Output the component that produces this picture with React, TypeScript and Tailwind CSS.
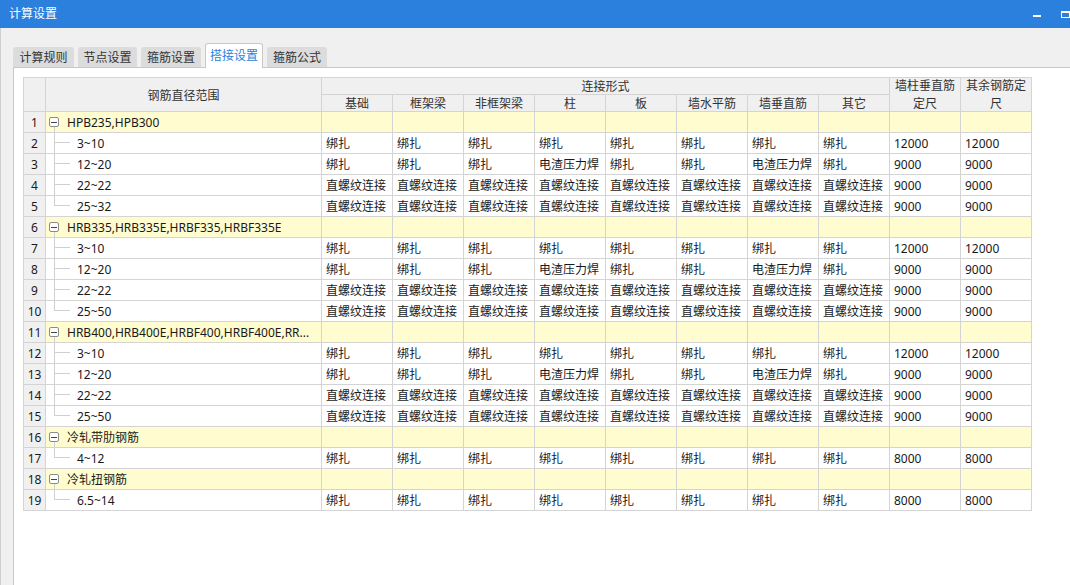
import React from 'react';

type Row = { n: number; label: string; group?: boolean; last?: boolean; vals?: string[] };

const B = '绑扎';
const Z = '直螺纹连接';
const D = '电渣压力焊';

const v310 = [B, B, B, B, B, B, B, B, '12000', '12000'];
const v1220 = [B, B, B, D, B, B, D, B, '9000', '9000'];
const vZ = [Z, Z, Z, Z, Z, Z, Z, Z, '9000', '9000'];
const v8000 = [B, B, B, B, B, B, B, B, '8000', '8000'];

const rows: Row[] = [
  { n: 1, label: 'HPB235,HPB300', group: true },
  { n: 2, label: '3~10', vals: v310 },
  { n: 3, label: '12~20', vals: v1220 },
  { n: 4, label: '22~22', vals: vZ },
  { n: 5, label: '25~32', vals: vZ, last: true },
  { n: 6, label: 'HRB335,HRB335E,HRBF335,HRBF335E', group: true },
  { n: 7, label: '3~10', vals: v310 },
  { n: 8, label: '12~20', vals: v1220 },
  { n: 9, label: '22~22', vals: vZ },
  { n: 10, label: '25~50', vals: vZ, last: true },
  { n: 11, label: 'HRB400,HRB400E,HRBF400,HRBF400E,RR...', group: true },
  { n: 12, label: '3~10', vals: v310 },
  { n: 13, label: '12~20', vals: v1220 },
  { n: 14, label: '22~22', vals: vZ },
  { n: 15, label: '25~50', vals: vZ, last: true },
  { n: 16, label: '冷轧带肋钢筋', group: true },
  { n: 17, label: '4~12', vals: v8000, last: true },
  { n: 18, label: '冷轧扭钢筋', group: true },
  { n: 19, label: '6.5~14', vals: v8000, last: true },
];

const subHeads = ['基础', '框架梁', '非框架梁', '柱', '板', '墙水平筋', '墙垂直筋', '其它'];

const tabs = [
  { label: '计算规则', w: 'w-[61px]' },
  { label: '节点设置', w: 'w-[59px]' },
  { label: '箍筋设置', w: 'w-[60px]' },
  { label: '搭接设置', w: 'w-[58px]', active: true },
  { label: '箍筋公式', w: 'w-[60px]' },
];

const cell = 'border-r border-b border-[#d4d4d4]';

const App: React.FC = () => {
  return (
    <div className="w-[1070px] h-[585px] overflow-hidden flex flex-col bg-[#f0f0f0] text-[12px] text-[#1a1a1a] font-['Noto_Sans','Noto_Sans_CJK_SC',sans-serif]">
      {/* title bar */}
      <div className="h-[28px] shrink-0 bg-[#2b7fdd] flex items-center pl-[9px] text-white">
        <span>计算设置</span>
        <div className="ml-auto flex items-center">
          <div className="w-[8px] h-[2px] bg-white mt-[4px]" />
          <div className="w-[9px] h-[7px] ml-[20px] border border-t-2 border-white" />
        </div>
      </div>

      <div className="flex-1 flex flex-col border-l border-[#cfcfcf]">
        {/* tabs */}
        <div className="h-[39px] shrink-0 flex items-end gap-[4px] pl-[12px]">
          {tabs.map((t) =>
            t.active ? (
              <div
                key={t.label}
                className={`${t.w} h-[25px] -mb-px relative z-10 bg-white border-t border-l border-r border-[#c8c8c8] rounded-t-[3px] flex items-center justify-center text-[#2b7fdd]`}
              >
                {t.label}
              </div>
            ) : (
              <div
                key={t.label}
                className={`${t.w} h-[20px] pt-px bg-[#dcdcdc] rounded-t-[3px] flex items-center justify-center text-[#333]`}
              >
                {t.label}
              </div>
            )
          )}
        </div>

        {/* panel */}
        <div className="flex-1 ml-[12px] bg-white border-l border-t border-[#c8c8c8] pl-[9px] pt-[9px]">
          <div className="w-[1009px] grid grid-cols-[22px_276px_repeat(10,71px)] grid-rows-[17px_17px_repeat(19,21px)] border-t border-l border-[#d4d4d4]">
            <div className={`${cell} row-span-2 bg-[#f0f0f0]`} />
            <div className={`${cell} row-span-2 pt-[2px] bg-[#f0f0f0] flex items-center justify-center text-[#333]`}>钢筋直径范围</div>
            <div className={`${cell} col-span-8 pt-px bg-[#f0f0f0] flex items-center justify-center text-[#333] leading-none`}>连接形式</div>
            <div className={`${cell} row-span-2 pt-px bg-[#f0f0f0] flex items-center justify-center text-center text-[#333] leading-[18px] px-[2px]`}>
              墙柱垂直筋定尺
            </div>
            <div className={`${cell} row-span-2 pt-px bg-[#f0f0f0] flex items-center justify-center text-center text-[#333] leading-[18px] px-[2px]`}>
              其余钢筋定尺
            </div>
            {subHeads.map((h) => (
              <div key={h} className={`${cell} pt-px bg-[#f0f0f0] flex items-center justify-center text-[#333] leading-none`}>
                {h}
              </div>
            ))}

            {rows.map((r) => (
              <React.Fragment key={r.n}>
                <div className={`${cell} pt-[2px] bg-[#f0f0f0] flex items-center justify-center`}>{r.n}</div>
                {r.group ? (
                  <>
                    <div className={`${cell} bg-[#fffdd0] flex items-stretch pl-[3px]`}>
                      <div className="w-[10px] flex flex-col">
                        <div className="h-[5px]" />
                        <div className="h-[10px] border border-[#8c8c8c] rounded-[2px] flex items-center justify-center bg-white">
                          <div className="w-[6px] h-px bg-[#444]" />
                        </div>
                        <div className="flex-1 ml-[5px] border-l border-[#d0d0d0]" />
                      </div>
                      <span className="ml-[8px] mt-[2px] self-center whitespace-nowrap">{r.label}</span>
                    </div>
                    {Array.from({ length: 10 }).map((_, i) => (
                      <div key={i} className={`${cell} bg-[#fffdd0]`} />
                    ))}
                  </>
                ) : (
                  <>
                    <div className={`${cell} flex items-stretch`}>
                      <div className="w-[8px]" />
                      <div className="w-[16px] flex flex-col">
                        <div className="h-[10px] border-l border-b border-[#d0d0d0]" />
                        <div className={r.last ? 'flex-1' : 'flex-1 border-l border-[#d0d0d0]'} />
                      </div>
                      <span className="ml-[7px] mt-[2px] self-center">{r.label}</span>
                    </div>
                    {r.vals!.map((v, i) => (
                      <div key={i} className={`${cell} pt-[2px] flex items-center pl-[4px] whitespace-nowrap overflow-hidden`}>
                        {v}
                      </div>
                    ))}
                  </>
                )}
              </React.Fragment>
            ))}
          </div>
        </div>
      </div>
    </div>
  );
};

export default App;
